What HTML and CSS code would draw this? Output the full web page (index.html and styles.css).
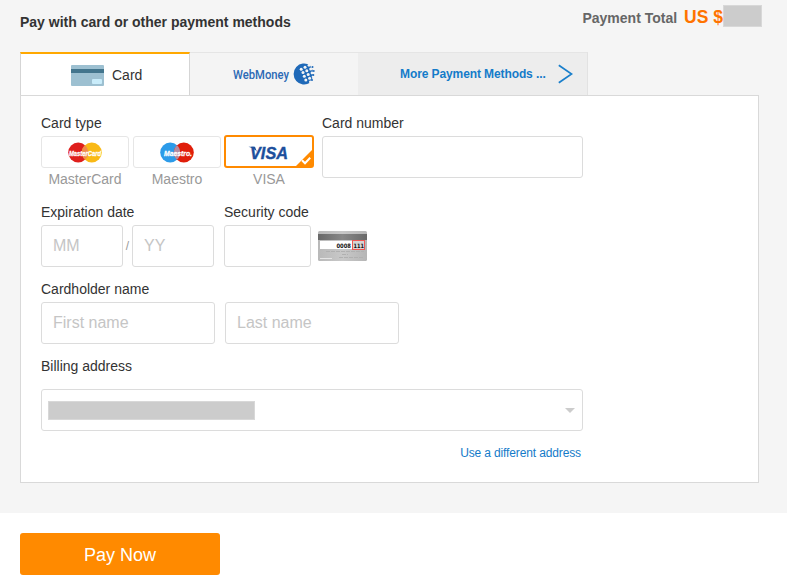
FILE: index.html
```
<!DOCTYPE html>
<html lang="en">
  <head>
    <meta charset="UTF-8" />
    <title>Payment</title>
    <link rel="stylesheet" href="styles.css">
  </head>
  <body>
    <div class="checkout">
      <div class="header">
        <h1 class="title">Pay with card or other payment methods</h1>
        <div class="total">
          <span class="total-label">Payment Total</span>
          <span class="total-price">US $</span>
          <span class="total-mask"></span>
        </div>
      </div>

      <div class="tabs">
        <div class="tab active">
          <svg class="card-icon" width="33" height="21" viewBox="0 0 33 21">
            <rect width="33" height="21" rx="1" fill="#9dc0d1" />
            <rect y="4" width="33" height="4" fill="#43758d" />
            <rect x="21" y="14" width="10" height="5" rx="1" fill="#c9ecfa" />
          </svg>
          <span class="card-text">Card</span>
        </div>
        <div class="tab webmoney">
          <svg width="57" height="16" viewBox="0 0 57 16">
            <text class="webmoney-text" x="0" y="12.5" textLength="56" lengthAdjust="spacingAndGlyphs">WebMoney</text>
          </svg>
          <svg width="22" height="22" viewBox="0 0 22 22">
            <path d="M17 2.3A10.5 10.5 0 1 0 17 19.7L20 14V8Z" fill="#1f69b8" />
            <g fill="#f4f4f4">
              <circle cx="8.2" cy="6.3" r="1.5" />
              <circle cx="12" cy="4.3" r="1.5" />
              <circle cx="16" cy="2.3" r="1.4" />
              <circle cx="10" cy="9.6" r="1.5" />
              <circle cx="13.8" cy="7.8" r="1.5" />
              <circle cx="17.7" cy="6" r="1.5" />
              <circle cx="11.3" cy="13.3" r="1.5" />
              <circle cx="15.2" cy="11.5" r="1.5" />
              <circle cx="19" cy="10" r="1.4" />
              <circle cx="12.8" cy="17" r="1.5" />
              <circle cx="16.6" cy="15.3" r="1.5" />
              <circle cx="20" cy="13.8" r="1.3" />
              <circle cx="17.4" cy="19" r="1.4" />
            </g>
            <g fill="#1f69b8">
              <circle cx="19.5" cy="4" r="1" />
              <circle cx="20.8" cy="8" r=".9" />
              <circle cx="20.4" cy="12" r=".9" />
              <circle cx="19" cy="17" r="1" />
            </g>
          </svg>
        </div>
        <div class="tab more">
          <span class="more-text">More Payment Methods ...</span>
          <svg width="15" height="20" viewBox="0 0 15 20">
            <path d="M.8 1.2L13.6 10L.8 18.8" fill="none" stroke="#1a7fcb" stroke-width="1.7" />
          </svg>
        </div>
      </div>

      <div class="panel">
        <div class="row type-row">
          <div class="field">
            <div class="label">Card type</div>
            <div class="types">
              <div class="type">
                <div class="type-box">
                  <svg width="38" height="21" viewBox="0 0 38 21">
                    <circle cx="12.2" cy="10.5" r="10" fill="#df1f1c" />
                    <circle cx="25.8" cy="10.5" r="10" fill="#f9b916" />
                    <path d="M19 3.2A10 10 0 0 1 19 17.8A10 10 0 0 1 19 3.2" fill="#f08a4b" />
                    <text class="brand-text" x="19" y="13.5" textLength="32" lengthAdjust="spacingAndGlyphs">MasterCard</text>
                  </svg>
                </div>
                <div class="type-name">MasterCard</div>
              </div>
              <div class="type">
                <div class="type-box">
                  <svg width="38" height="21" viewBox="0 0 38 21">
                    <circle cx="12.2" cy="10.5" r="10" fill="#2c9be9" />
                    <circle cx="25.8" cy="10.5" r="10" fill="#e01e0a" />
                    <path d="M19 3.2A10 10 0 0 1 19 17.8A10 10 0 0 1 19 3.2" fill="#b58ba0" />
                    <text class="brand-text" x="20" y="13.5" textLength="28" lengthAdjust="spacingAndGlyphs">Maestro.</text>
                  </svg>
                </div>
                <div class="type-name">Maestro</div>
              </div>
              <div class="type selected">
                <div class="type-box">
                  <svg width="46" height="20" viewBox="0 0 46 20">
                    <text class="visa-text" x="4" y="16.5" textLength="38" lengthAdjust="spacingAndGlyphs">VISA</text>
                    <path d="M2.5 4.7H9L11 10Q8 6 2.5 4.7Z" fill="#1c4f9c" />
                  </svg>
                  <svg class="check" width="16" height="16" viewBox="0 0 16 16">
                    <path d="M16 0V16H0Z" fill="#ff8a00" />
                    <path d="M6 10.2L9 13.2L14.2 7.8" fill="none" stroke="#fff" stroke-width="2" />
                  </svg>
                </div>
                <div class="type-name">VISA</div>
              </div>
            </div>
          </div>
          <div class="field">
            <div class="label">Card number</div>
            <input class="input number" type="text">
          </div>
        </div>

        <div class="row">
          <div class="field">
            <div class="label">Expiration date</div>
            <div class="expiry">
              <input class="input month" type="text" placeholder="MM">
              <span class="slash">/</span>
              <input class="input month" type="text" placeholder="YY">
            </div>
          </div>
          <div class="field">
            <div class="label">Security code</div>
            <div class="security">
              <input class="input code" type="text">
              <svg width="49" height="30" viewBox="0 0 49 30">
                <defs>
                  <linearGradient id="back" x2="1" y2="0">
                    <stop offset="0" stop-color="#b9b9b9" />
                    <stop offset=".5" stop-color="#c8c8c8" />
                    <stop offset="1" stop-color="#b5b5b5" />
                  </linearGradient>
                  <linearGradient id="stripe" x2="1" y2="0">
                    <stop offset="0" stop-color="#686868" />
                    <stop offset=".5" stop-color="#888" />
                    <stop offset="1" stop-color="#686868" />
                  </linearGradient>
                </defs>
                <rect width="49" height="30" rx="1.5" fill="url(#back)" />
                <rect y="3" width="49" height="6" fill="url(#stripe)" />
                <rect x="2" y="10" width="33" height="8" fill="#fff" />
                <rect x="34.5" y="9.5" width="12" height="9" fill="#d5d5d5" stroke="#ee5955" />
                <text class="cvc-text" x="18.5" y="16.5" textLength="14.5" lengthAdjust="spacingAndGlyphs">0008</text>
                <text class="cvc-text" x="35.5" y="16.5" textLength="10.5" lengthAdjust="spacingAndGlyphs">111</text>
                <path d="M8 20.5H46M24 23.5H30M21 26.5H46" stroke="#b0b0b0" stroke-dasharray="4 1" />
                <path d="M2 27.5H14" stroke="#e4e4e4" />
              </svg>
            </div>
          </div>
        </div>

        <div class="row">
          <div class="field">
            <div class="label">Cardholder name</div>
            <div class="names">
              <input class="input name" type="text" placeholder="First name">
              <input class="input name" type="text" placeholder="Last name">
            </div>
          </div>
        </div>

        <div class="billing">
          <div class="label">Billing address</div>
          <div class="select">
            <span class="address-mask"></span>
            <span class="arrow"></span>
          </div>
          <a class="different">Use a different address</a>
        </div>
      </div>
    </div>

    <div class="footer">
      <button class="pay">Pay Now</button>
    </div>
  </body>
</html>
```
FILE: styles.css
```
* {
  box-sizing: border-box;
}

body {
  margin: 0;
  font-family: "Liberation Sans", Arial, sans-serif;
  font-size: 14px;
  color: #333;
  background: #fff;
  overflow: hidden;
}

svg {
  display: block;
  flex-shrink: 0;
}

.checkout {
  height: 513px;
  padding: 0 28px 0 20px;
  background: #f5f5f5;
}

.header {
  display: flex;
  justify-content: space-between;
  height: 52px;
}

.title {
  margin: 12px 0 0;
  font-size: 14px;
  line-height: 20px;
}

.total {
  display: flex;
  margin-right: -3px;
  font-weight: bold;
  white-space: nowrap;
}

.total-label {
  margin: 8px 7px 0 0;
  line-height: 20px;
  color: #666;
}

.total-price {
  margin-top: 7px;
  font-size: 17.5px;
  line-height: 20px;
  color: #ff7300;
}

.total-mask {
  width: 39px;
  height: 22px;
  margin-top: 5px;
  background: #ccc;
  border: 1px solid #d8d8d8;
}

.tabs {
  display: flex;
  height: 43px;
}

.tab {
  display: flex;
  align-items: center;
  border-top: 1px solid #e5e5e5;
}

.tab.active {
  width: 170px;
  padding-left: 50px;
  gap: 8px;
  background: #fff;
  border: 1px solid #d5d5d5;
  border-top: 2px solid #ffa800;
  border-bottom: none;
}

.card-icon {
  margin-top: 1px;
}

.webmoney {
  width: 168px;
  padding-left: 43px;
  gap: 3px;
  background: #f4f4f4;
}

.webmoney-text {
  font-family: Roboto, sans-serif;
  font-size: 12px;
  font-weight: 500;
  fill: #2b69b5;
}

.more {
  width: 230px;
  padding-left: 42px;
  background: #ededed;
  border-right: 1px solid #e2e2e2;
}

.more-text {
  width: 158px;
  font-size: 12px;
  font-weight: bold;
  letter-spacing: -0.1px;
  color: #147bc9;
  white-space: nowrap;
}

.panel {
  height: 388px;
  padding: 17px 20px 0;
  background: #fff;
  border: 1px solid #d9d9d9;
}

.row {
  display: flex;
  gap: 10px;
  height: 77px;
}

.type-row {
  gap: 8px;
  height: 89px;
}

.label {
  margin-bottom: 3px;
  line-height: 20px;
}

.input {
  display: block;
  height: 42px;
  padding: 0 11px;
  font-family: inherit;
  font-size: 16px;
  background: #fff;
  border: 1px solid #dcdcdc;
  border-radius: 3px;
  outline: none;
}

.input::placeholder {
  color: #c5c5c5;
}

.number {
  width: 261px;
}

.month {
  width: 82px;
}

.code {
  width: 87px;
}

.name {
  width: 174px;
}

.types {
  display: flex;
  gap: 4px;
}

.type {
  width: 88px;
  text-align: center;
}

.type-box {
  display: flex;
  justify-content: center;
  align-items: center;
  height: 32px;
  border: 1px solid #e6e6e6;
  border-radius: 3px;
}

.type-name {
  margin-top: 1px;
  line-height: 20px;
  color: #999;
}

.type.selected {
  width: 90px;
  margin: -1px 0 0 -1px;
}

.selected .type-box {
  position: relative;
  height: 33px;
  border: 2px solid #ff8a00;
}

.check {
  position: absolute;
  right: 0;
  bottom: 0;
}

.brand-text {
  font-size: 8px;
  font-weight: bold;
  font-style: italic;
  text-anchor: middle;
  fill: #fff;
  stroke: #fff;
  stroke-width: 0.3px;
}

.visa-text {
  font-size: 17px;
  font-weight: bold;
  font-style: italic;
  fill: #1c4f9c;
  stroke: #1c4f9c;
  stroke-width: 0.4px;
}

.expiry {
  display: flex;
  align-items: center;
}

.slash {
  width: 9px;
  font-size: 12px;
  text-align: center;
  color: #999;
}

.security {
  display: flex;
  align-items: center;
  gap: 7px;
}

.cvc-text {
  font-family: "DejaVu Sans", sans-serif;
  font-size: 6px;
  font-weight: bold;
  fill: #111;
}

.names {
  display: flex;
  gap: 10px;
}

.billing {
  width: 542px;
}

.billing .label {
  margin-bottom: 13px;
}

.select {
  display: flex;
  justify-content: space-between;
  align-items: center;
  height: 42px;
  padding: 0 7px 0 6px;
  border: 1px solid #dcdcdc;
  border-radius: 3px;
}

.address-mask {
  width: 207px;
  height: 19px;
  background: #ccc;
  border: 1px solid #d8d8d8;
}

.arrow {
  border: 5px solid transparent;
  border-top: 5px solid #ccc;
  border-bottom: none;
}

.different {
  display: block;
  margin: 12px 2px 0 0;
  font-size: 12px;
  line-height: 20px;
  letter-spacing: -0.13px;
  text-align: right;
  color: #147bc9;
}

.footer {
  padding: 20px;
}

.pay {
  display: block;
  width: 200px;
  height: 42px;
  padding: 2px 0 0;
  font-family: inherit;
  font-size: 18px;
  color: #fff;
  background: #ff8a00;
  border: none;
  border-radius: 3px;
}
```
